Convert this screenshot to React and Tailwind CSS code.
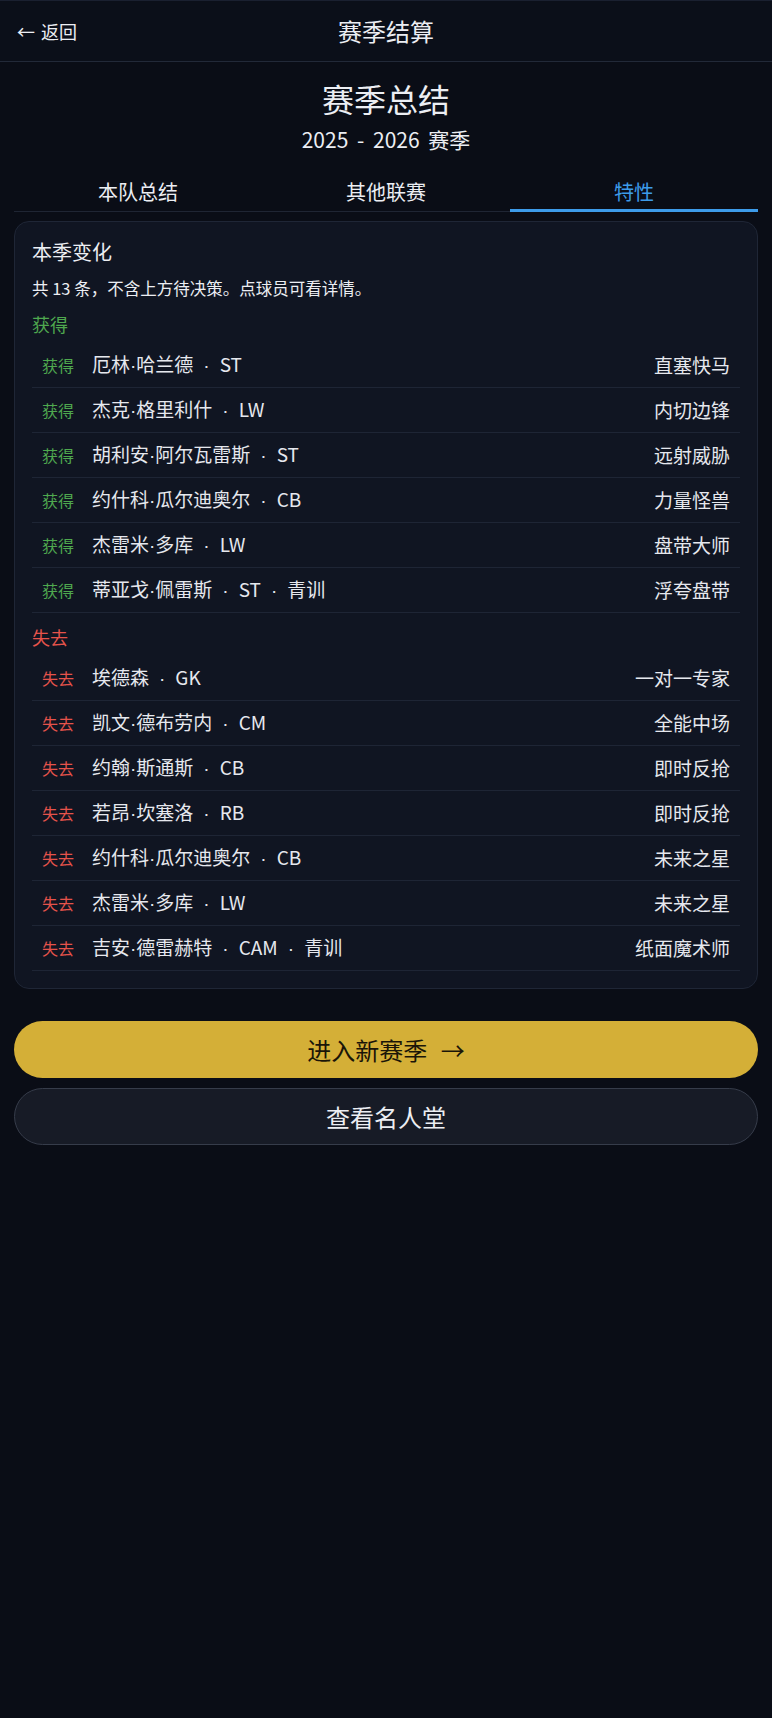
import { useState } from 'react'

const gained = [
  { name: '厄林·哈兰德 · ST', trait: '直塞快马' },
  { name: '杰克·格里利什 · LW', trait: '内切边锋' },
  { name: '胡利安·阿尔瓦雷斯 · ST', trait: '远射威胁' },
  { name: '约什科·瓜尔迪奥尔 · CB', trait: '力量怪兽' },
  { name: '杰雷米·多库 · LW', trait: '盘带大师' },
  { name: '蒂亚戈·佩雷斯 · ST · 青训', trait: '浮夸盘带' },
]

const lost = [
  { name: '埃德森 · GK', trait: '一对一专家' },
  { name: '凯文·德布劳内 · CM', trait: '全能中场' },
  { name: '约翰·斯通斯 · CB', trait: '即时反抢' },
  { name: '若昂·坎塞洛 · RB', trait: '即时反抢' },
  { name: '约什科·瓜尔迪奥尔 · CB', trait: '未来之星' },
  { name: '杰雷米·多库 · LW', trait: '未来之星' },
  { name: '吉安·德雷赫特 · CAM · 青训', trait: '纸面魔术师' },
]

const tabs = ['本队总结', '其他联赛', '特性']

// CJK font draws the middle dot full width; the design uses a narrow one
function Name({ text }) {
  const fields = text.split(' · ')
  return fields.map((f, i) => {
    const parts = f.split('·')
    return (
      <span key={i}>
        {parts.map((p, j) => (
          <span key={j}>
            {p}
            {j < parts.length - 1 && <span className="font-['Liberation_Sans']">·</span>}
          </span>
        ))}
        {i < fields.length - 1 && <span className="mx-[10px] font-['Liberation_Sans']">·</span>}
      </span>
    )
  })
}

function ChangeRow({ kind, item }) {
  const gain = kind === 'gain'
  return (
    <div className="h-[45px] flex items-center px-[10px] border-b border-[#1e2535]">
      <span className={`w-[34px] text-[16px] ${gain ? 'text-[#4fa84f]' : 'text-[#e5534b]'}`}>
        {gain ? '获得' : '失去'}
      </span>
      <span className="ml-[16px] text-[19px] text-[#e6e8ee]">
        <Name text={item.name} />
      </span>
      <span className="ml-auto text-[19px] text-[#e6e8ee]">{item.trait}</span>
    </div>
  )
}

export default function App() {
  const [tab, setTab] = useState(2)

  return (
    <div
      className="min-h-[1718px] bg-[#0a0d16] text-[#eceef3]"
      style={{ fontFamily: '"Noto Sans CJK SC", "Noto Sans", sans-serif' }}
    >
      {/* Header */}
      <div className="h-[62px] border-t border-[#1a2030] border-b border-b-[#222938] bg-[#0b0f19] flex items-center relative">
        <button className="absolute left-[17px] flex items-center gap-[6px] text-[18px] text-[#eceef3]">
          <span>←</span>
          <span>返回</span>
        </button>
        <h1 className="w-full text-center text-[24px] leading-none">赛季结算</h1>
      </div>

      <div className="px-[14px]">
        {/* Title */}
        <div className="pt-[16px] text-center">
          <h2 className="text-[32px] leading-[40px]">赛季总结</h2>
          <p className="mt-[7px] text-[21px] leading-[28px] [word-spacing:4px]">2025 - 2026 赛季</p>
        </div>

        {/* Tabs */}
        <div className="mt-[15px] flex border-b border-[#1f2533]">
          {tabs.map((t, i) => (
            <button
              key={t}
              onClick={() => setTab(i)}
              className={`flex-1 h-[44px] -mb-px pt-[6px] text-[20px] leading-[28px] border-b-[3px] ${
                tab === i ? 'border-[#3d9be9] text-[#3d9be9]' : 'border-transparent text-[#eceef3]'
              }`}
            >
              {t}
            </button>
          ))}
        </div>

        {/* Changes card */}
        <div className="mt-[9px] rounded-[15px] border border-[#1f2636] bg-[#101522] px-[17px] pt-[16px] pb-[17px]">
          <h3 className="text-[20px] leading-[28px]">本季变化</h3>
          <p className="mt-[10px] text-[16.5px] leading-[24px]">共 13 条，不含上方待决策。点球员可看详情。</p>

          <p className="mt-[12px] text-[18px] leading-[24px] text-[#4fa84f]">获得</p>
          <div className="mt-[7px]">
            {gained.map((g) => (
              <ChangeRow key={g.name} kind="gain" item={g} />
            ))}
          </div>

          <p className="mt-[12px] text-[18px] leading-[24px] text-[#e5534b]">失去</p>
          <div className="mt-[7px]">
            {lost.map((l) => (
              <ChangeRow key={l.name + l.trait} kind="lose" item={l} />
            ))}
          </div>
        </div>

        {/* Actions */}
        <button className="mt-[32px] w-full h-[57px] rounded-full bg-[#d4af37] text-[#1a1508] text-[24px] [word-spacing:8px]">
          进入新赛季 →
        </button>
        <button className="mt-[10px] w-full h-[57px] rounded-full bg-[#171b26] border border-[#363c4a] text-[24px] text-[#eceef3]">
          查看名人堂
        </button>
      </div>
    </div>
  )
}
